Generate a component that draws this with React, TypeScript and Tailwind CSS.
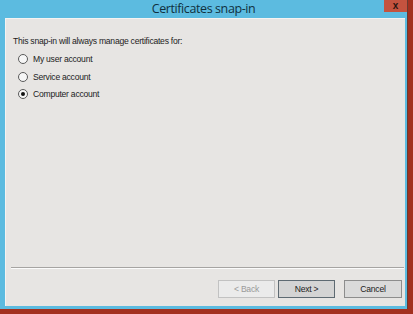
import { useState } from "react";

const options = ["My user account", "Service account", "Computer account"];

export default function App() {
  const [selected, setSelected] = useState(2);

  return (
    <div className="w-[413px] h-[314px] bg-[#a3301f] overflow-hidden">
      <div className="w-[408px] h-[309px] bg-[#5cbbe0] border-r border-[#6b3a30] flex flex-col">
        {/* title bar */}
        <div className="h-[18px] grid grid-cols-[1fr_auto_1fr] items-start">
          <div />
          <span className="text-[12.5px] leading-[17px] text-[#10303e] font-['Open_Sans',sans-serif] tracking-[-0.4px]">
            Certificates snap-in
          </span>
          <div className="flex justify-end">
            <div className="w-[23px] h-[12px] bg-[#c4533f] flex items-center justify-center text-[10px] leading-none font-bold text-[#2a1510] font-['Liberation_Sans',sans-serif]">
              x
            </div>
          </div>
        </div>

        {/* client area */}
        <div className="ml-[5px] mr-[2px] h-[288px] bg-[#e7e5e3] border-t border-l border-[#f4f3f2] flex flex-col font-['Liberation_Sans',sans-serif] text-[#1c1c1c]">
          <p className="mt-[16px] ml-[7px] text-[8.6px] leading-[12px] tracking-[-0.25px]">
            This snap-in will always manage certificates for:
          </p>
          <div className="mt-[6px] ml-[12px] flex flex-col gap-[5.5px]">
            {options.map((o, i) => (
              <label
                key={o}
                className="flex items-center gap-[5px] text-[8.6px] leading-[12px] tracking-[-0.25px] cursor-default"
                onClick={() => setSelected(i)}
              >
                <span className="w-[10px] h-[10px] rounded-full border border-[#5a5a5a] bg-[#f6f6f6] flex items-center justify-center">
                  {selected === i && <span className="w-[4px] h-[4px] rounded-full bg-[#111]" />}
                </span>
                {o}
              </label>
            ))}
          </div>

          <div className="mt-auto ml-[5px] mr-[1px] border-t border-[#a6a4a2] border-b border-b-[#fbfbfb]" />
          <div className="mt-[11px] mb-[8px] mr-[3px] flex justify-end gap-[3px] text-[8.6px] tracking-[-0.25px]">
            <button className="w-[57px] h-[18px] border border-[#c2c2c2] bg-[#ebebeb] text-[#9a9a9a]">
              &lt; Back
            </button>
            <button className="w-[57px] h-[18px] border border-[#5e6a72] bg-[#d4d4d4] text-[#1c1c1c] mr-[6px]">
              Next &gt;
            </button>
            <button className="w-[58px] h-[18px] border border-[#8d8d8d] bg-[#dadada] text-[#1c1c1c]">
              Cancel
            </button>
          </div>
        </div>
      </div>
    </div>
  );
}
